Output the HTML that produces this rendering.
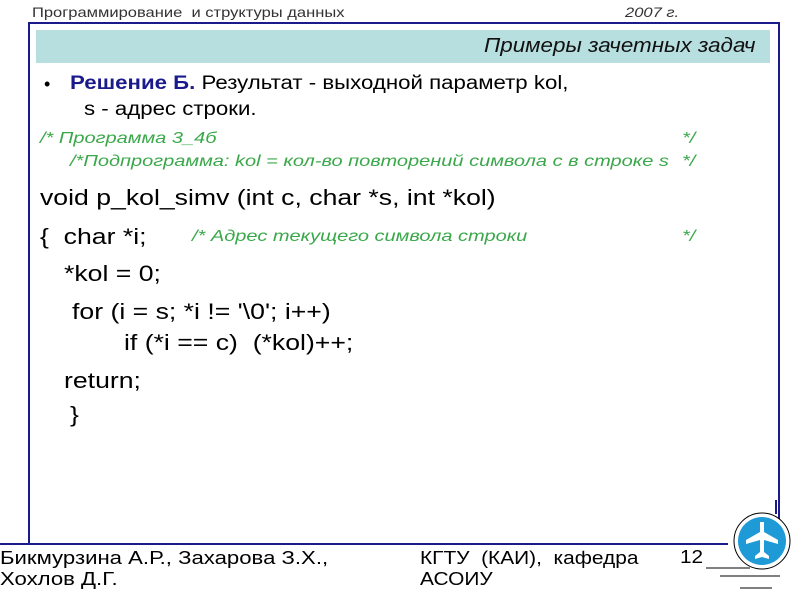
<!DOCTYPE html>
<html><head><meta charset="utf-8"><style>
body{margin:0;width:800px;height:600px;background:#fff;position:relative;overflow:hidden;font-family:"Liberation Sans",sans-serif}
.a{position:absolute;white-space:pre;line-height:1;transform-origin:0 0}
.g{color:#3aa84a;font-style:italic;font-size:16px;transform:scaleX(1.25)}
.c{font-size:22px;color:#000;transform:scaleX(1.21)}
.t{font-size:19px;transform:scaleX(1.17)}
</style></head><body>
<div class="a" style="left:32px;top:5px;font-size:14px;color:#333;transform:scaleX(1.18)">Программирование  и структуры данных</div>
<div class="a" style="left:625px;top:5px;font-size:14px;color:#333;font-style:italic;transform:scaleX(1.18)">2007 г.</div>
<div style="position:absolute;left:28px;top:22px;width:748px;height:520px;border:2px solid #1a1a8c;border-bottom:none"></div>
<div style="position:absolute;left:36px;top:30px;width:734px;height:33px;background:#b8dfe0"></div>
<div class="a" style="left:484px;top:36px;font-size:20px;font-style:italic;color:#111;transform:scaleX(1.12)">Примеры зачетных задач</div>
<div class="a" style="left:44px;top:75px;font-size:18px">•</div>
<div class="a t" style="left:70px;top:74px"><b style="color:#1a1a8c">Решение Б.</b> Результат - выходной параметр kol,</div>
<div class="a t" style="left:84px;top:100px">s - адрес строки.</div>
<div class="a g" style="left:40px;top:131px">/* Программа 3_4б</div>
<div class="a g" style="left:682px;top:131px">*/</div>
<div class="a g" style="left:70px;top:154px">/*Подпрограмма: kol = кол-во повторений символа с в строке s</div>
<div class="a g" style="left:682px;top:154px">*/</div>
<div class="a c" style="left:40px;top:187px">void p_kol_simv (int c, char *s, int *kol)</div>
<div class="a c" style="left:40px;top:226px">{  char *i;</div>
<div class="a g" style="left:192px;top:229px">/* Адрес текущего символа строки</div>
<div class="a g" style="left:682px;top:229px">*/</div>
<div class="a c" style="left:64px;top:263px">*kol = 0;</div>
<div class="a c" style="left:72px;top:301px">for (i = s; *i != '\0'; i++)</div>
<div class="a c" style="left:124px;top:332px">if (*i == c)  (*kol)++;</div>
<div class="a c" style="left:64px;top:370px">return;</div>
<div class="a c" style="left:70px;top:404px">}</div>
<div style="position:absolute;left:0;top:543px;width:728px;height:2px;background:#1a1a8c"></div>
<div class="a" style="left:0;top:548px;font-size:18px;line-height:21px;transform:scaleX(1.23)">Бикмурзина А.Р., Захарова З.Х.,
Хохлов Д.Г.</div>
<div class="a" style="left:420px;top:548px;font-size:18px;line-height:21px;transform:scaleX(1.16)">КГТУ  (КАИ),  кафедра
АСОИУ</div>
<div class="a" style="left:680px;top:548px;font-size:18px;transform:scaleX(1.15)">12</div>
<svg style="position:absolute;left:700px;top:500px" width="100" height="100">
<line x1="6" y1="68" x2="50" y2="68" stroke="#000" stroke-width="1"/>
<line x1="20" y1="76" x2="80" y2="76" stroke="#000" stroke-width="1"/>
<line x1="40" y1="88" x2="72" y2="88" stroke="#000" stroke-width="1"/>
<circle cx="62" cy="41" r="28" fill="#fff" stroke="#000" stroke-width="1"/>
<circle cx="62" cy="41" r="24" fill="#1e9ad6"/>
<path d="M60 22h4v10l14 8v4l-14-4v12l5 4v3l-7-2-7 2v-3l5-4V40l-14 4v-4l14-8z" fill="#fff"/>
<line x1="76" y1="0" x2="76" y2="14" stroke="#1a1a8c" stroke-width="2"/>
</svg>
</body></html>
